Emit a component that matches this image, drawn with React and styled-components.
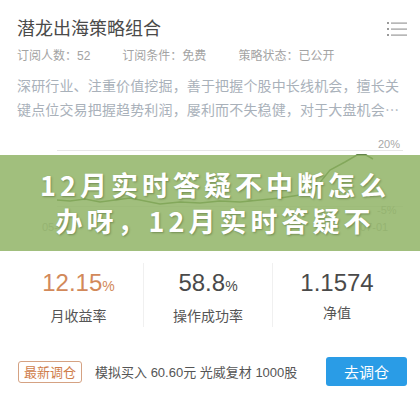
import React from "react";
import styled, { createGlobalStyle } from "styled-components";

const Global = createGlobalStyle`
  html, body { margin: 0; padding: 0; background: #fff; }
  body { font-family: "Liberation Sans", "Noto Sans CJK SC", sans-serif; }
  * { box-sizing: border-box; }
`;

const Card = styled.div`
  width: 420px;
  height: 406px;
  overflow: hidden;
  background: #fff;
`;

const Header = styled.div`
  padding: 15px 13px 0 17px;
`;

const TitleRow = styled.div`
  display: flex;
  justify-content: space-between;
  align-items: flex-start;
`;

const Title = styled.h1`
  margin: 0;
  font-size: 18px;
  line-height: 24px;
  font-weight: normal;
  color: #4a4a4a;
  font-family: "Noto Sans CJK SC", sans-serif;
`;

const MenuIcon = styled.svg`
  margin-top: 7px;
  display: block;
`;

const Meta = styled.div`
  display: flex;
  gap: 32px;
  margin-top: 8px;
  font-size: 12px;
  line-height: 18px;
  color: #a3a3a3;
`;

const Desc = styled.p`
  margin: 8px 4px 0 0;
  font-size: 14px;
  line-height: 24px;
  letter-spacing: 0.15px;
  color: #a9b1ba;
  font-family: "Noto Sans CJK SC", sans-serif;
  display: -webkit-box;
  -webkit-line-clamp: 2;
  -webkit-box-orient: vertical;
  overflow: hidden;
`;

const ChartArea = styled.div`
  position: relative;
  height: 135px;
  margin-top: 7px;
`;

const ChartSvg = styled.svg`
  display: block;
`;

const Banner = styled.div`
  position: absolute;
  left: 0;
  right: 0;
  top: 27px;
  height: 96px;
  background: rgba(146, 180, 104, 0.86);
  display: flex;
  align-items: center;
  justify-content: center;
  overflow: hidden;
`;

const BannerText = styled.div`
  width: 380px;
  padding-left: 10px;
  text-align: center;
  color: #fff;
  font-family: "Noto Sans CJK SC", sans-serif;
  font-weight: bold;
  font-size: 27px;
  line-height: 36px;
  letter-spacing: 4px;
  text-shadow: 1px 1px 2px rgba(50, 70, 25, 0.4);
`;

const Stats = styled.div`
  display: grid;
  grid-template-columns: repeat(3, 1fr);
  margin: 0 19px 0 14px;
`;

const Stat = styled.div`
  display: flex;
  flex-direction: column;
  align-items: center;
  padding: 6px 0 2px;
  border-left: ${(p) => (p.$first ? "none" : "1px solid #f0f0f0")};
`;

const Value = styled.div`
  font-size: 24px;
  line-height: 28px;
  color: ${(p) => (p.$accent ? "#d2895a" : "#4a4a4a")};
`;

const Pct = styled.span`
  font-size: 14px;
`;

const Label = styled.div`
  margin-top: 5px;
  font-size: 14px;
  line-height: 20px;
  color: #555;
  font-family: "Noto Sans CJK SC", sans-serif;
`;

const Bottom = styled.div`
  display: flex;
  align-items: center;
  margin-top: 30px;
  padding: 0 13px 0 18px;
`;

const Tag = styled.span`
  display: inline-flex;
  align-items: center;
  justify-content: center;
  height: 22px;
  padding: 0 5px;
  border: 1px solid #d5a283;
  border-radius: 3px;
  font-size: 13px;
  color: #cf7d4a;
  font-family: "Noto Sans CJK SC", sans-serif;
`;

const Trade = styled.span`
  margin-left: 13px;
  font-size: 13px;
  color: #555;
  flex: 1;
`;

const Button = styled.button`
  width: 81px;
  height: 29px;
  border: none;
  border-radius: 3px;
  background: #2a9ce6;
  color: #fff;
  font-size: 15px;
  font-family: "Noto Sans CJK SC", sans-serif;
  padding: 0;
`;

export default function App() {
  return (
    <Card>
      <Global />
      <Header>
        <TitleRow>
          <Title>潜龙出海策略组合</Title>
          <MenuIcon width="20" height="14" viewBox="0 0 20 14">
            <g fill="#9a9a9a">
              <rect x="0" y="0" width="2" height="2" />
              <rect x="4" y="0.5" width="16" height="1.2" />
              <rect x="0" y="6" width="2" height="2" />
              <rect x="4" y="6.5" width="16" height="1.2" />
              <rect x="0" y="12" width="2" height="2" />
              <rect x="4" y="12.5" width="16" height="1.2" />
            </g>
          </MenuIcon>
        </TitleRow>
        <Meta>
          <span>订阅人数：52</span>
          <span>订阅条件：免费</span>
          <span>策略状态：已公开</span>
        </Meta>
        <Desc>
          深研行业、注重价值挖掘，善于把握个股中长线机会，擅长关键点位交易把握趋势利润，屡利而不失稳健，对于大盘机会的把握也有独到之处。
        </Desc>
      </Header>
      <ChartArea>
        <ChartSvg width="420" height="135" viewBox="0 0 420 135">
          <line x1="57" y1="22.5" x2="403" y2="22.5" stroke="#e6e6e6" strokeWidth="1" />
          <text x="378" y="20" fontSize="11" fill="#a8a8a8" fontFamily="Liberation Sans">20%</text>
          <line x1="57" y1="78.5" x2="403" y2="78.5" stroke="#e6e6e6" strokeWidth="1" />
          <text x="377" y="86" fontSize="11" fill="#a8a8a8" fontFamily="Liberation Sans">-5%</text>
          <text x="42" y="103" fontSize="11" fill="#a8a8a8" fontFamily="Liberation Sans">05-01</text>
          <text x="360" y="103" fontSize="11" fill="#a8a8a8" fontFamily="Liberation Sans">07-01</text>
          <polyline
            fill="none"
            stroke="#2f5a12"
            strokeWidth="1.5"
            points="57,72 70,73 85,71 100,74 115,72 130,70 145,73 160,76 180,74 200,75 220,73 240,74 260,72 280,70 300,67 318,57 330,42 345,34 357,27 366,27 373,31"
          />
        </ChartSvg>
        <Banner>
          <BannerText>12月实时答疑不中断怎么办呀，12月实时答疑不</BannerText>
        </Banner>
      </ChartArea>
      <Stats>
        <Stat $first>
          <Value $accent>
            12.15<Pct>%</Pct>
          </Value>
          <Label>月收益率</Label>
        </Stat>
        <Stat>
          <Value>
            58.8<Pct>%</Pct>
          </Value>
          <Label>操作成功率</Label>
        </Stat>
        <Stat>
          <Value>1.1574</Value>
          <Label>净值</Label>
        </Stat>
      </Stats>
      <Bottom>
        <Tag>最新调仓</Tag>
        <Trade>模拟买入 60.60元 光威复材 1000股</Trade>
        <Button>去调仓</Button>
      </Bottom>
    </Card>
  );
}
